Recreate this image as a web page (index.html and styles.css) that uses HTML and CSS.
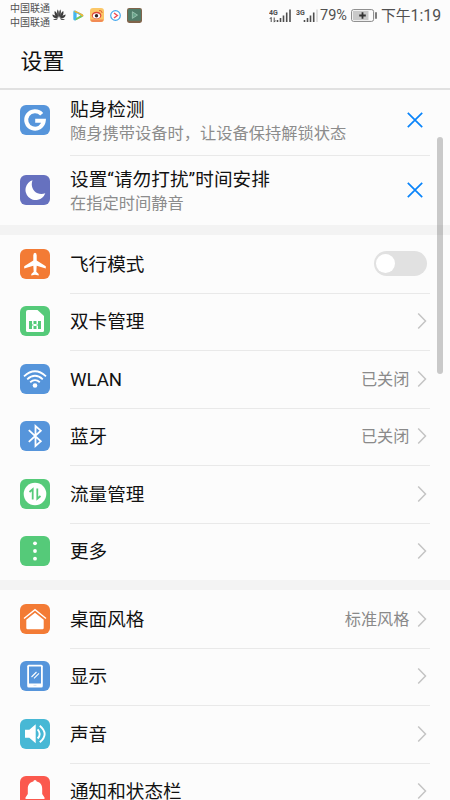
FILE: index.html
```
<!DOCTYPE html>
<html lang="zh-CN">
<head>
<meta charset="utf-8">
<title>设置</title>
<link rel="stylesheet" href="styles.css">
</head>
<body>
<svg class="defs" width="0" height="0">
  <symbol id="chev" viewBox="0 0 10 18"><path d="M1.200 1.500 8.500 9 1.200 16.500" fill="none" stroke="#c4c4c4" stroke-width="1.500"/></symbol>
  <symbol id="close" viewBox="0 0 16 16"><path d="M.8.8 15.200 15.200M15.200.8.8 15.200" fill="none" stroke="#0a84fa" stroke-width="1.700"/></symbol>
</svg>
<div class="phone">
  <div class="status">
    <div class="carriers"><span>中国联通</span><span>中国联通</span></div>
    <div class="apps">
      <svg width="14" height="12" viewBox="0 0 14 12" fill="#3c3c3c">
        <path d="M6.800 8.800C5 6 4.600 2.500 5.600.6 6.900 1.500 7.100 5 6.800 8.800ZM7.200 8.800C9 6 9.400 2.500 8.400.6 7.100 1.500 6.900 5 7.200 8.800ZM6.200 9C3 7.500 2 4.500 2.700 2 4.600 3 5.900 6 6.200 9ZM7.800 9C11 7.500 12 4.500 11.300 2 9.400 3 8.100 6 7.800 9ZM5.900 9.700C3 10 .5 8.500.3 5.600 2.500 5.800 4.500 7.500 5.900 9.700ZM8.100 9.700C11 10 13.500 8.500 13.700 5.600 11.500 5.800 9.500 7.500 8.100 9.700ZM5.700 10.200C4 11.600 2 11.200 1.200 9.900ZM8.300 10.200C10 11.600 12 11.200 12.800 9.900Z"/>
      </svg>
      <svg width="11" height="11" viewBox="0 0 11 11"><path d="M.3 2Q.3.300 2 .600L9.500 4.200Q11.300 5.500 9.500 6.800L2.200 10.400Q.3 10.700.3 9Z" fill="#43b7ee"/><path d="M2 .6 9.500 4.200Q11.300 5.500 9.500 6.800L5.500 3.500 1.200 2Z" fill="#f9b72d"/><path d="M2.200 10.400 9.500 6.800 7.500 5.500 3.300 8Z" fill="#82cb45"/><path d="M3.600 3.300 7.400 5.500 3.600 7.800Z" fill="#fff"/></svg>
      <svg width="14" height="14" viewBox="0 0 14 14"><rect width="14" height="14" rx="3" fill="#fbc768"/><path d="M.5 11.500H13.500V12Q13 14 11 14H3Q1 14 .5 12Z" fill="#f28b55"/><ellipse cx="6.600" cy="7.400" rx="4.800" ry="3.700" fill="#dc443a"/><ellipse cx="6.500" cy="7.800" rx="3.700" ry="2.600" fill="#fff"/><circle cx="6.500" cy="7.700" r="1.700" fill="#33251f"/><path d="M9 2.500Q12 2 12.200 5" fill="none" stroke="#e46438"/></svg>
      <svg width="11" height="11" viewBox="0 0 11 11"><circle cx="5.500" cy="5.500" r="4.800" fill="#fff" stroke="#45a7ed" stroke-width="1.200"/><path d="M4 3 7.300 5.500 4 8" fill="none" stroke="#ef4d58" stroke-width="1.500"/></svg>
      <svg width="15" height="15" viewBox="0 0 14 14"><rect width="14" height="14" rx="2" fill="#80644b"/><rect x="1" y="1" width="12" height="11" rx="1" fill="#507d6a"/><path d="M5 3.500 9.800 6.600 5 9.700Z" fill="#68a48b" stroke="#a6cdbb" stroke-width=".7"/></svg>
    </div>
    <div class="sys">
      <div class="sig"><svg width="24" height="16" viewBox="0 0 24 16"><text x="0" y="6.500" class="net">4G</text><path d="M2.200 14V9.500M.8 11 2.200 9.300M5.200 9.500V14M6.600 12.500 5.200 14.200" stroke="#4e4e4e" fill="none"/><path d="M8.500 14V12M11.500 14V10M14.500 14V7.500M17.700 14V4.500M21 14V1.500" stroke="#4e4e4e" stroke-width="1.600"/></svg></div>
      <div class="sig"><svg width="24" height="16" viewBox="0 0 24 16"><text x="0" y="6.500" class="net">3G</text><path d="M8.500 14V12M11.500 14V10M14.500 14V7.500M17.700 14V4.500" stroke="#4e4e4e" stroke-width="1.600"/><path d="M21 14V1.500" stroke="#d6d6d6" stroke-width="1.600"/></svg></div>
      <span class="pct">79%</span>
      <svg class="bat" width="26" height="13" viewBox="0 0 26 13"><rect x=".6" y=".6" width="22" height="11.800" rx="2" fill="#fcfcfc" stroke="#858585" stroke-width="1"/><rect x="2" y="2" width="15.500" height="9" fill="#c9c9c9"/><path d="M8.200 6.500H14.800M11.500 3.200V9.800" stroke="#333" stroke-width="1.800"/><path d="M25 3.300V9.700" stroke="#555" stroke-width="1.500"/></svg>
      <span class="time"><i>下午</i>1:19</span>
    </div>
  </div>
  <header><h1>设置</h1></header>
  <main>
    <section>
      <div class="row tall">
        <svg class="icon blue" viewBox="0 0 30 30"><path d="M21.700 9.200A8.800 8.800 0 1 0 23.800 15.700H15.200" fill="none" stroke="#fff" stroke-width="4"/></svg>
        <div class="body"><div class="text"><b>贴身检测</b><small>随身携带设备时，让设备保持解锁状态</small></div><svg class="x"><use href="#close"/></svg></div>
      </div>
      <div class="row tall">
        <svg class="icon purple" viewBox="0 0 30 30"><path d="M12.500 5.200A10.200 10.200 0 1 0 25.300 18.300C17 21.500 9.300 14 12.500 5.200Z" fill="#fff"/></svg>
        <div class="body"><div class="text"><b>设置<q>“</q>请勿打扰<q>”</q>时间安排</b><small>在指定时间静音</small></div><svg class="x"><use href="#close"/></svg></div>
      </div>
    </section>
    <section>
      <div class="row">
        <svg class="icon orange" viewBox="0 0 30 30"><path d="M15 3.800Q16.700 3.900 16.700 6.500V11.500L25.800 17.200V19.400L16.700 16.700 16.300 22.800 18.700 25V26.500L15 25.700 11.300 26.500V25L13.700 22.800 13.300 16.700 4.200 19.400V17.200L13.300 11.500V6.500Q13.300 3.900 15 3.800Z" fill="#fff"/></svg>
        <div class="body"><b>飞行模式</b><span class="toggle"></span></div>
      </div>
      <div class="row">
        <svg class="icon green" viewBox="0 0 30 30"><path d="M8 4H17.500L24 10V24.500Q24 26 22.500 26H7.500Q6 26 6 24.500V6Q6 4 8 4Z" fill="#fff"/><path d="M9 15H12V23H9ZM18 15H21V23H18ZM13.500 15H16.500V18H13.500ZM13.500 20H16.500V23H13.500ZM12 18.500H13.500V19.500H12ZM16.500 18.500H18V19.500H16.500Z" fill="#55ca79"/></svg>
        <div class="body"><b>双卡管理</b><svg class="chev"><use href="#chev"/></svg></div>
      </div>
      <div class="row">
        <svg class="icon blue" viewBox="0 0 30 30"><g fill="none" stroke="#fff" stroke-width="1.800"><path d="M4 12.300Q15 2.300 26 12.300M7.200 15.300Q15 8.300 22.800 15.300M10.200 18.200Q15 14 19.800 18.200"/></g><circle cx="15" cy="21.500" r="2.300" fill="#fff"/></svg>
        <div class="body"><b>WLAN</b><span class="val">已关闭</span><svg class="chev"><use href="#chev"/></svg></div>
      </div>
      <div class="row">
        <svg class="icon blue" viewBox="0 0 30 30"><path d="M8.800 9.200 20.800 20.300 15.500 25V5L20.800 9.700 8.800 20.800" fill="none" stroke="#fff" stroke-width="1.800"/></svg>
        <div class="body"><b>蓝牙</b><span class="val">已关闭</span><svg class="chev"><use href="#chev"/></svg></div>
      </div>
      <div class="row">
        <svg class="icon green" viewBox="0 0 30 30"><circle cx="15" cy="15" r="11.300" fill="#fff"/><path d="M9.500 13 12.700 10.300V20.500M17.300 9.500V19.700L20.500 17" fill="none" stroke="#55ca79" stroke-width="1.800"/></svg>
        <div class="body"><b>流量管理</b><svg class="chev"><use href="#chev"/></svg></div>
      </div>
      <div class="row">
        <svg class="icon green" viewBox="0 0 30 30" fill="#fff"><circle cx="15" cy="7.300" r="1.900"/><circle cx="15" cy="15" r="1.900"/><circle cx="15" cy="22.700" r="1.900"/></svg>
        <div class="body"><b>更多</b><svg class="chev"><use href="#chev"/></svg></div>
      </div>
    </section>
    <section>
      <div class="row">
        <svg class="icon orange" viewBox="0 0 30 30"><path d="M4 14.500 15 5.700 26 14.500" fill="none" stroke="#fff" stroke-width="1.500"/><path d="M15 8.800 23.700 15.800V24Q23.700 25.200 22.500 25.200H7.500Q6.300 25.200 6.300 24V15.800Z" fill="#fff"/></svg>
        <div class="body"><b>桌面风格</b><span class="val">标准风格</span><svg class="chev"><use href="#chev"/></svg></div>
      </div>
      <div class="row">
        <svg class="icon blue" viewBox="0 0 30 30"><rect x="7.200" y="3.800" width="15.600" height="22.600" rx="1.500" fill="#fff"/><path d="M9 5.500H21V22.500H9Z" fill="#5695db"/><path d="M11.500 16 16.500 11M14 17.300 19 12.300" stroke="#fff" stroke-width="1.100"/><path d="M13.500 24.400H16.500" stroke="#d9e6f7"/></svg>
        <div class="body"><b>显示</b><svg class="chev"><use href="#chev"/></svg></div>
      </div>
      <div class="row">
        <svg class="icon cyan" viewBox="0 0 30 30"><path d="M5 10.700H9.300L15.700 5.200V24.300L9.300 18.800H5Z" fill="#fff"/><path d="M17.600 10.300Q21.800 15 17.600 19.500M19.800 6.700Q29.500 15 19.800 23.300" fill="none" stroke="#fff" stroke-width="1.900"/></svg>
        <div class="body"><b>声音</b><svg class="chev"><use href="#chev"/></svg></div>
      </div>
      <div class="row">
        <svg class="icon red" viewBox="0 0 30 30"><path d="M15 4Q16.500 4 16.700 5.600C20.700 6.500 22.200 9.300 22.200 13V18L24.500 21.500V23H5.500V21.500L7.800 18V13C7.800 9.300 9.300 6.500 13.300 5.600Q13.500 4 15 4Z" fill="#fff"/></svg>
        <div class="body"><b>通知和状态栏</b><svg class="chev"><use href="#chev"/></svg></div>
      </div>
    </section>
  </main>
  <div class="scroll"></div>
</div>
</body>
</html>
```
FILE: styles.css
```
* { box-sizing: border-box; }
body { margin: 0; background: #fcfcfc; font-family: Roboto, "Noto Sans CJK SC", sans-serif; color: #111; }
.defs { position: absolute; }
.phone { position: relative; width: 450px; height: 800px; overflow: hidden; display: flex; flex-direction: column; }
.status { height: 36px; flex: none; display: flex; align-items: flex-start; padding-left: 10px; color: #505050; }
.carriers { display: flex; flex-direction: column; width: 42px; padding-top: 2px; font-size: 10px; line-height: 13.500px; white-space: nowrap; }
.apps { display: flex; align-items: center; height: 30px; }
.apps svg:nth-child(2) { margin-left: 7px; }
.apps svg:nth-child(n+3) { margin-left: 6px; }
.sys { margin-left: auto; display: flex; align-items: center; height: 31px; width: 181px; }
.sig { height: 16px; width: 27px; flex: none; }
.sig svg { display: block; }
.net { font: 700 7px Roboto, sans-serif; fill: #4e4e4e; }
.pct { font-size: 14.500px; line-height: 20px; width: 31px; margin-left: -3px; flex: none; padding-top: 1px; }
.bat { flex: none; }
.time { display: flex; align-items: baseline; font-size: 15.800px; line-height: 20px; margin-left: 4px; white-space: nowrap; }
.time i { font-style: normal; font-size: 14.800px; }
header { height: 54px; flex: none; border-bottom: 2px solid #e1e1e1; padding: 9px 20.500px 0; }
h1 { margin: 0; font-size: 22px; line-height: 34px; font-weight: 400; }
main { flex: 1; min-height: 0; overflow: hidden; }
section + section { border-top: 10px solid #f3f3f3; }
section:first-child { margin-top: -5px; }
.row { height: 57.500px; display: flex; align-items: center; padding: 0 20px; }
.row.tall { height: 70px; }
.icon { width: 30px; height: 30px; flex: none; border-radius: 6px; margin-right: 20px; }
.blue { background: #5695db; }
.purple { background: #6671bf; }
.orange { background: #f37b35; }
.green { background: #55ca79; }
.cyan { background: #47b8d5; }
.red { background: #fb594e; }
.body { flex: 1; height: 100%; display: flex; align-items: center; box-shadow: 0 1px 0 #e9e9e9; }
.row:last-child .body { box-shadow: none; }
b { font-size: 18.600px; line-height: 26px; font-weight: 400; white-space: nowrap; margin-right: auto; padding-top: 2px; }
.text { display: flex; flex-direction: column; margin-right: auto; padding-top: 1px; }
.text b { padding-top: 0; letter-spacing: .06px; }
small { font-size: 16.250px; line-height: 22px; color: #8c8c8c; white-space: nowrap; }
q { quotes: none; }
.x { width: 16px; height: 16px; margin: 0 7px 1px 0; flex: none; }
.val { font-size: 16.200px; color: #8a8a8a; line-height: 24px; margin-right: 7.500px; padding-top: 2px; }
.chev { width: 10px; height: 18px; margin-right: 3px; flex: none; }
.toggle { width: 53px; height: 25px; border-radius: 13px; background: #e1e1e1; padding: 3px 2px; margin-right: 3px; }
.toggle::before { content: ""; display: block; width: 19px; height: 19px; border-radius: 50%; background: #fff; }
.scroll { position: absolute; left: 437px; top: 137px; width: 5.500px; height: 237px; border-radius: 3px; background: rgba(0, 0, 0, .2); }
```
